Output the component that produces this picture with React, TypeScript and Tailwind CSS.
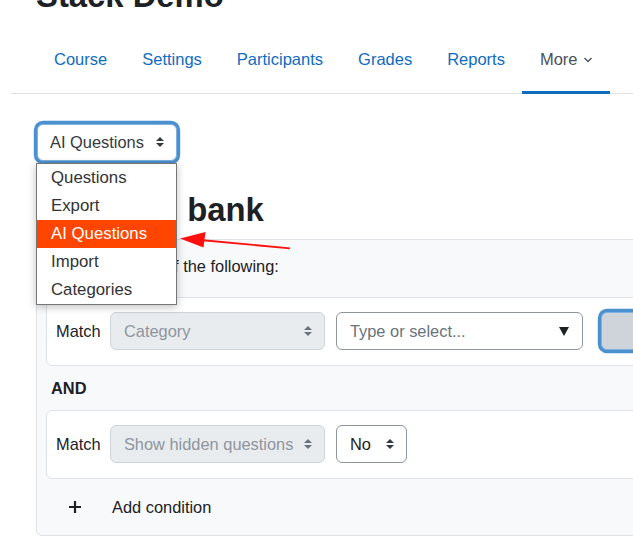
import React from "react";

function Caret({ color = "#343a40" }: { color?: string }) {
  return (
    <svg width="8" height="10" viewBox="0 0 4 5" className="shrink-0">
      <path fill={color} d="M2 0L0 2h4zm0 5L0 3h4z" />
    </svg>
  );
}

const navItems = ["Course", "Settings", "Participants", "Grades", "Reports"];
const listItems = ["Questions", "Export", "AI Questions", "Import", "Categories"];

export default function App() {
  return (
    <div className="relative w-[633px] h-[542px] overflow-hidden bg-white font-['Liberation_Sans',sans-serif] text-[#1d2125]">
      {/* Title */}
      <h1 className="mt-[-24px] pl-[36px] text-[32.8px] leading-[40px] font-bold whitespace-nowrap">
        Stack Demo
      </h1>

      {/* Secondary nav */}
      <nav className="mt-[15px] ml-[11px] pl-[25.5px] flex border-b border-[#dee2e6]">
        {navItems.map((t) => (
          <div
            key={t}
            className="mb-[-1px] px-[17.5px] pt-[16px] pb-[20px] border-b-[3px] border-transparent text-[16.5px] leading-[24px] text-[#0f6cbf] whitespace-nowrap"
          >
            {t}
          </div>
        ))}
        <div className="mb-[-1px] px-[17.5px] pt-[16px] pb-[20px] border-b-[3px] border-[#0f6cbf] text-[16.5px] leading-[24px] text-[#495057] flex items-center whitespace-nowrap">
          More
          <svg width="10" height="6" viewBox="0 0 10 6" className="ml-[5px] mt-[2px]">
            <path d="M1.5 1l3.5 3.5L8.5 1" fill="none" stroke="#495057" strokeWidth="1.3" />
          </svg>
        </div>
      </nav>

      {/* Main */}
      <div className="pl-[36px]">
        <div className="ml-[1.2px] mt-[30px] w-[139.6px] h-[36.5px] rounded-[6px] border border-[#7fb2e0] shadow-[0_0_0_3.2px_rgba(15,108,191,0.75)] flex items-center justify-between pl-[11.8px] pr-[12px] text-[16.4px] text-[#343a40] bg-white">
          <span className="whitespace-nowrap">AI Questions</span>
          <Caret />
        </div>

        <h2 className="mt-[29.1px] text-[32.8px] leading-[40px] font-bold whitespace-nowrap">
          Question bank
        </h2>

        <div className="mt-[9.4px] w-[700px] border border-[#dee2e6] rounded-[6px] bg-[#f8f9fa] pb-[9px]">
          {/* Header row */}
          <div className="mt-[7.4px] h-[38px] flex items-center pl-[14px] text-[16.4px] whitespace-nowrap">
            <span>Match</span>
            <div className="ml-[8px] w-[54px] h-[38px] rounded-[6px] border border-[#8f959e] bg-white flex items-center pl-[10px]">
              All
            </div>
            <span className="ml-[7.3px]">of the following:</span>
          </div>

          {/* Card 1 */}
          <div className="mt-[11.6px] ml-[9px] border border-[#dee2e6] rounded-[6px] bg-white flex items-center pl-[9px] py-[14.5px] text-[16.4px] whitespace-nowrap">
            <span>Match</span>
            <div className="ml-[9.3px] w-[215px] h-[38px] rounded-[6px] border border-[#ced4da] bg-[#e9ecef] flex items-center justify-between pl-[13px] pr-[12px] text-[#8f959e]">
              <span>Category</span>
              <Caret color="#6a737b" />
            </div>
            <div className="ml-[11px] w-[247px] h-[38px] rounded-[6px] border border-[#8f959e] bg-white flex items-center justify-between pl-[13px] pr-[13px] text-[#6a737b]">
              <span>Type or select...</span>
              <svg width="10" height="10" viewBox="0 0 10 10">
                <path d="M0 1h10L5 10z" fill="#1d2125" />
              </svg>
            </div>
            <div className="ml-[18px] w-[80px] h-[38px] rounded-[6px] border border-[#7fb2e0] bg-[#ced4da] shadow-[0_0_0_3.2px_rgba(15,108,191,0.75)]" />
          </div>

          {/* AND */}
          <div className="mt-[10.2px] pl-[14px] text-[16.4px] leading-[24px] font-bold">AND</div>

          {/* Card 2 */}
          <div className="mt-[9.8px] ml-[9px] border border-[#dee2e6] rounded-[6px] bg-white flex items-center pl-[9px] py-[14.5px] text-[16.4px] whitespace-nowrap">
            <span>Match</span>
            <div className="ml-[9.3px] w-[215px] h-[38px] rounded-[6px] border border-[#ced4da] bg-[#e9ecef] flex items-center justify-between pl-[13px] pr-[12px] text-[#8f959e]">
              <span>Show hidden questions</span>
              <Caret color="#6a737b" />
            </div>
            <div className="ml-[11px] w-[71px] h-[38px] rounded-[6px] border border-[#8f959e] bg-white flex items-center justify-between pl-[13px] pr-[12px] text-[#1d2125]">
              <span>No</span>
              <Caret />
            </div>
          </div>

          {/* Add condition */}
          <div className="mt-[9px] h-[38px] flex items-center pl-[31px] text-[16.4px] whitespace-nowrap">
            <svg width="14" height="14" viewBox="0 0 14 14">
              <path d="M7 1v12M1 7h12" stroke="#1d2125" strokeWidth="2.2" />
            </svg>
            <span className="ml-[30px]">Add condition</span>
          </div>
        </div>
      </div>

      {/* Native select dropdown list (overlay) */}
      <div className="absolute left-[36px] top-[163px] w-[141px] border border-[#767676] bg-white shadow-[0_2px_8px_rgba(0,0,0,0.25)]">
        {listItems.map((t, i) => (
          <div
            key={t}
            className={
              i === 2
                ? "h-[28px] leading-[28px] pl-[14px] text-[16.8px] bg-[#ff4500] text-white whitespace-nowrap"
                : "h-[28px] leading-[28px] pl-[14px] text-[16.8px] text-[#333333] whitespace-nowrap"
            }
          >
            {t}
          </div>
        ))}
      </div>

      {/* Red annotation arrow */}
      <svg className="absolute left-0 top-0 pointer-events-none" width="633" height="542">
        <line x1="290" y1="248.3" x2="200" y2="240" stroke="#ff1010" strokeWidth="1.8" />
        <polygon points="180,238.5 205.5,232 203.5,247.5" fill="#ff1010" />
      </svg>
    </div>
  );
}
